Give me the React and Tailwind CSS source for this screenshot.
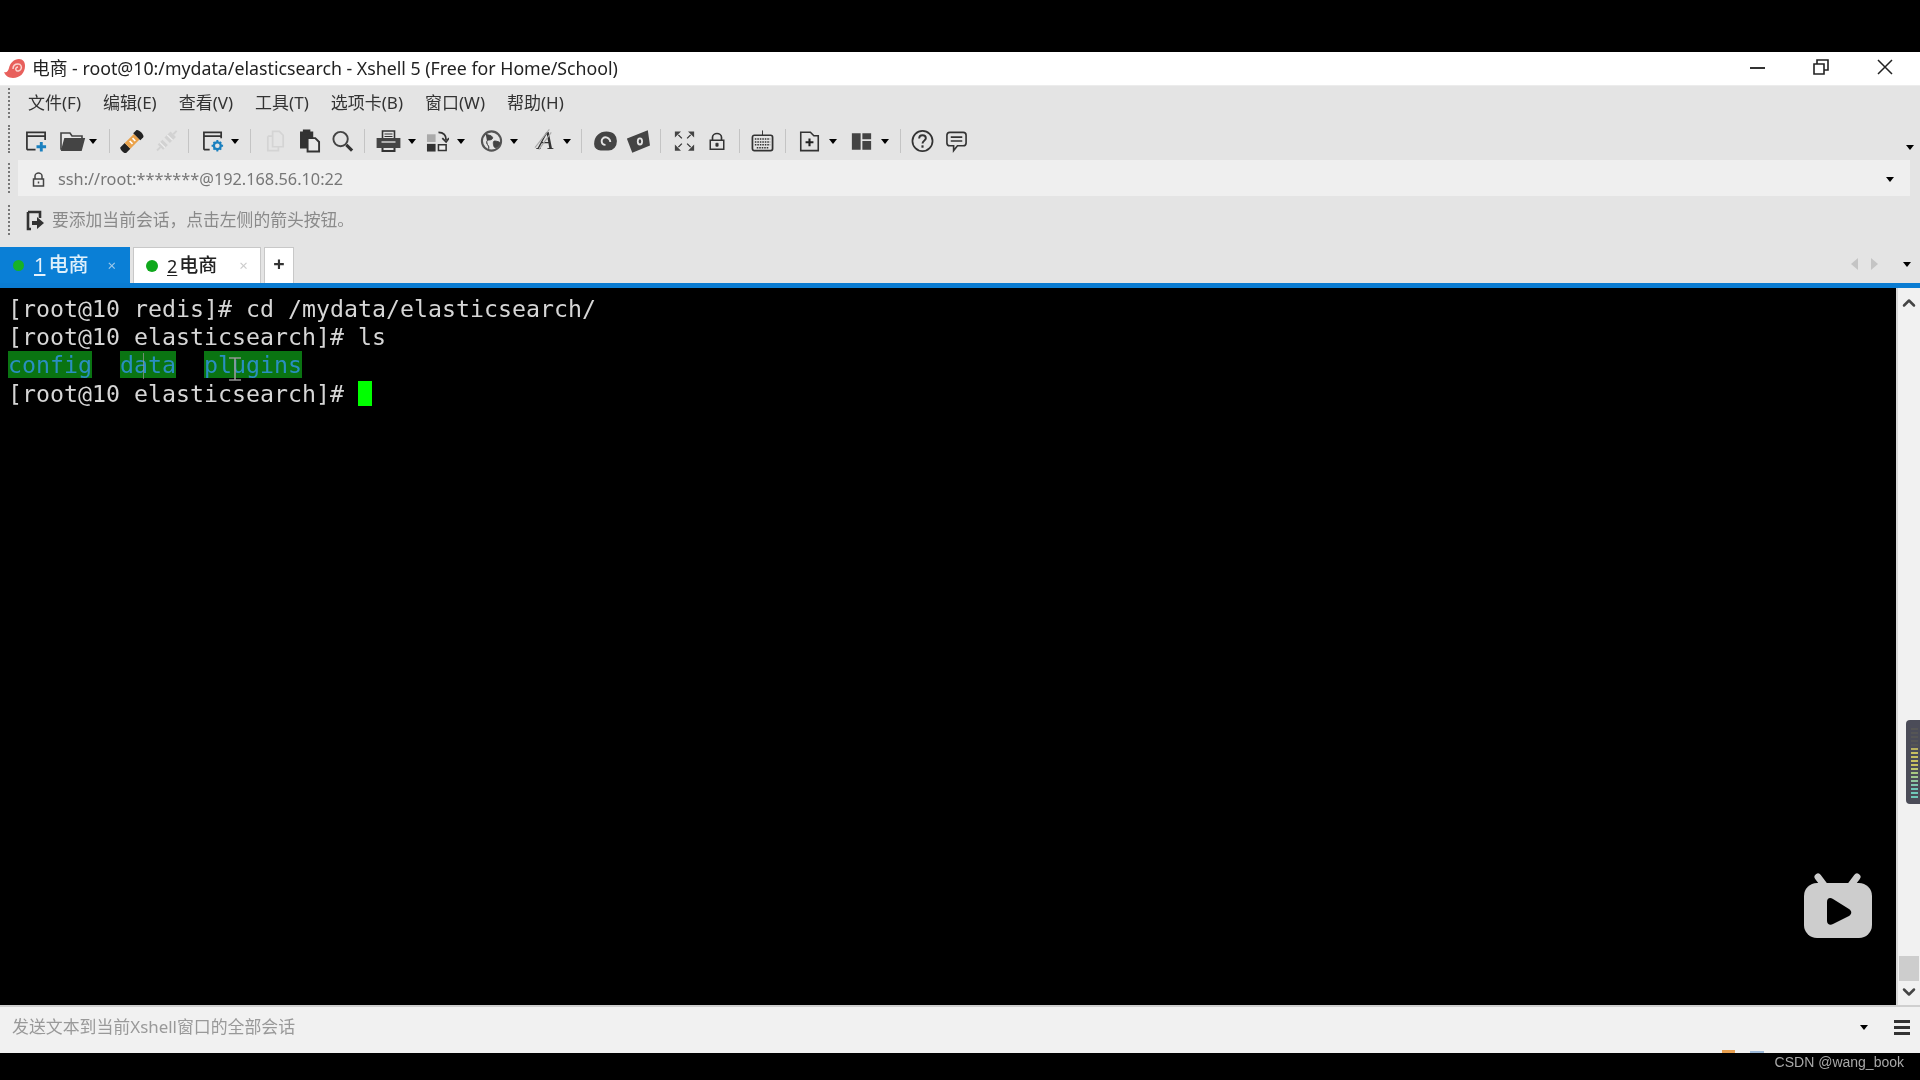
import { ChevronUp, ChevronDown } from 'lucide-react';

const UI_FONT = { fontFamily: '"Noto Sans", "Noto Sans CJK SC", sans-serif' };

const menus = ['文件(F)', '编辑(E)', '查看(V)', '工具(T)', '选项卡(B)', '窗口(W)', '帮助(H)'];

function Caret({ className = '' }) {
    return <span className={`block w-0 h-0 border-x-[4px] border-x-transparent border-t-[5px] border-t-black ${className}`} />;
}

function Sep({ className = '' }) {
    return <span className={`block w-px h-[24px] bg-[#c4c4c4] ${className}`} />;
}

function Handle({ className = '' }) {
    return <span className={`block w-[2px] border-l-2 border-dotted border-[#777] ${className}`} />;
}

function Icon({ w = 24, color = '#333', children, className = '' }) {
    return (
        <svg width={w} height={24} viewBox="0 0 24 24" fill="none" stroke={color} strokeWidth="1.8" className={`block shrink-0 ${className}`}>
            {children}
        </svg>
    );
}

function Toolbar() {
    return (
        <div className="h-[38px] flex items-center pl-[25px] pt-[4px]">
            {/* new session */}
            <Icon w={23}>
                <path d="M2 21V3h19v8M2 7h19M2 21h9" />
                <path d="M17 13v10M12 18h10" stroke="#1a80bf" strokeWidth="3" />
            </Icon>
            {/* open */}
            <Icon w={28} className="ml-[10px]">
                <path d="M1 4h9l2 3h10v3H6l-3 10H1z" fill="#e8e8e8" stroke="#444" strokeWidth="1.6" />
                <path d="M5 10h19l-3 11H2z" fill="#444" stroke="#444" />
            </Icon>
            <Caret className="ml-[3px]" />
            <Sep className="ml-[12px]" />
            {/* connect */}
            <Icon w={25} className="ml-[10px]">
                <g transform="rotate(-45 12 12)">
                    <path d="M-1 8h6v8H-1c-2 0-2-8 0-8z" fill="#222" stroke="none" />
                    <path d="M5 8h13v8H5z" fill="#eaa24a" stroke="none" />
                    <path d="M18 7h4c3 0 3 10 0 10h-4z" fill="#222" stroke="none" />
                    <path d="M10 10v4M14 10v4" stroke="#fff" strokeWidth="1.6" />
                </g>
            </Icon>
            {/* disconnect */}
            <Icon w={23} color="#d2d2d2" className="ml-[10px]">
                <g transform="rotate(-45 12 12)">
                    <path d="M-2 12h5M22 12h5" strokeWidth="2" />
                    <path d="M3 8h7v8H3zM13 8h9v8h-9z" fill="#d2d2d2" stroke="none" />
                    <path d="M6 8v8M17 8v8" stroke="#eee" strokeWidth="1.4" />
                </g>
            </Icon>
            <Sep className="ml-[10px]" />
            {/* properties */}
            <Icon w={23} className="ml-[13px]">
                <path d="M2 21V3h18v6M2 7h18M2 21h6" />
                <circle cx="16" cy="17" r="3.6" stroke="#1a80bf" strokeWidth="2.4" />
                <path d="M16 11v2M16 21v2M10 17h2M20 17h2M12 13l1.500 1.500M18.500 19.500L20 21M20 13l-1.500 1.500M13.500 19.500L12 21" stroke="#1a80bf" strokeWidth="2" />
            </Icon>
            <Caret className="ml-[6px]" />
            <Sep className="ml-[11px]" />
            {/* copy */}
            <Icon w={23} color="#d4d4d4" className="ml-[13px]">
                <path d="M9 2h7l4 4v12H9zM4 7h5M4 7v15h11v-4" />
            </Icon>
            {/* paste */}
            <Icon w={23} className="ml-[11px]">
                <path d="M3 3h12v6H9v10H3z" fill="#333" stroke="#333" />
                <path d="M6 1h6v3H6z" fill="#333" />
                <path d="M10 9h8l4 4v10H10z" fill="#e8e8e8" strokeWidth="2" />
            </Icon>
            {/* find */}
            <Icon w={23} className="ml-[10px]">
                <circle cx="10" cy="10" r="7.5" stroke="#444" strokeWidth="2" />
                <path d="M16 16l6 6" strokeWidth="3.2" stroke="#333" />
            </Icon>
            <Sep className="ml-[10px]" />
            {/* print */}
            <Icon w={25} className="ml-[11px]">
                <path d="M6 2h12v8H6z" strokeWidth="1.6" />
                <path d="M8 5h8M8 7.500h8" strokeWidth="1.2" />
                <path d="M1 10h22v8H1z" fill="#444" stroke="#444" />
                <path d="M6 19v3h12v-3" strokeWidth="2" />
                <path d="M5 13h14" stroke="#ddd" strokeWidth="1.4" />
            </Icon>
            <Caret className="ml-[7px]" />
            {/* transfer */}
            <Icon w={23} className="ml-[10px]">
                <path d="M1 5h9v8H1z" fill="#aaa" stroke="none" />
                <path d="M1 15h9v8H1z" fill="#333" stroke="none" />
                <path d="M13 16h8v6h-8z" fill="#eee" stroke="#333" strokeWidth="1.6" />
                <path d="M13 3c5 0 8 3 8 8M17 9l4 4 3-4" strokeWidth="1.8" />
            </Icon>
            <Caret className="ml-[8px]" />
            {/* globe */}
            <Icon w={23} className="ml-[15px]">
                <circle cx="12" cy="12" r="10" strokeWidth="2.2" stroke="#555" />
                <path d="M6 5c3 1 6 1 7 3s-2 3-4 3-3 3-1 5 1 4 1 5M15 12c2 0 6 1 6 2s-3 5-5 5-3-7-1-7z" fill="#444" stroke="#444" strokeWidth="1" />
            </Icon>
            <Caret className="ml-[7px]" />
            {/* font */}
            <div className="relative w-[23px] h-[26px] ml-[16px] flex items-center justify-center overflow-visible">
                <Icon w={23} className="absolute left-0 top-0">
                    <path d="M1 20L16 1M5 22L18 4" stroke="#aaa" strokeWidth="1.2" />
                </Icon>
                <span className="text-[26px] leading-[26px] italic text-[#333]" style={{ fontFamily: '"Liberation Serif", serif' }}>A</span>
            </div>
            <Caret className="ml-[6px]" />
            <Sep className="ml-[10px]" />
            {/* swirl */}
            <Icon w={23} className="ml-[12px]">
                <path d="M1 15C1 8 6 3 13 3s10 4 10 9-3 9-8 9H7c-3 0-6-2-6-6z" fill="#444" stroke="#444" />
                <path d="M12 16c-3 0-4-2-4-4s2-4 4-4 5 2 5 5" stroke="#e4e4e4" strokeWidth="2" />
            </Icon>
            {/* script */}
            <Icon w={23} className="ml-[10px]">
                <path d="M1 10l20-8 2 14-17 7z" fill="#444" stroke="#444" />
                <ellipse cx="13.5" cy="12.5" rx="3.2" ry="4.2" fill="#e4e4e4" stroke="none" />
                <ellipse cx="13.5" cy="12.5" rx="1.3" ry="2.2" fill="#444" stroke="none" />
            </Icon>
            <Sep className="ml-[10px]" />
            {/* full screen */}
            <Icon w={21} className="ml-[13px]">
                <path d="M1 1h7L1 8zM23 1h-7l7 7zM1 23h7l-7-7zM23 23h-7l7-7z" fill="#444" stroke="none" />
                <path d="M5 5l4 4M19 5l-4 4M5 19l4-4M19 19l-4-4" strokeWidth="1.5" />
            </Icon>
            {/* lock */}
            <Icon w={18} className="ml-[13px]">
                <path d="M6 11V7c0-3 3-5 6-5s6 2 6 5v4" strokeWidth="2.2" />
                <path d="M3 11h18v12H3z" strokeWidth="2" />
                <path d="M10.500 15h3v4h-3z" fill="#333" strokeWidth="1" />
            </Icon>
            <Sep className="ml-[13px]" />
            {/* keyboard */}
            <Icon w={23} className="ml-[11px]">
                <path d="M12 1v5" strokeWidth="1" />
                <rect x="1.5" y="6" width="21" height="16" rx="2" strokeWidth="1.8" />
                <path d="M4 10h16M4 13h16M4 16h16M6 19h12" strokeWidth="1.6" strokeDasharray="1.6 1" />
            </Icon>
            <Sep className="ml-[11px]" />
            {/* new folder */}
            <Icon w={21} className="ml-[13px]">
                <path d="M2 2h11l4 4h5v17H2z" strokeWidth="1.8" />
                <path d="M12 9v9M7.500 13.500h9" strokeWidth="2.4" stroke="#222" />
            </Icon>
            <Caret className="ml-[9px]" />
            {/* layout */}
            <Icon w={21} className="ml-[14px]">
                <path d="M1 3h10v19H1zM13 3h10v7H13zM13 12h10v10H13z" fill="#444" stroke="none" />
            </Icon>
            <Caret className="ml-[9px]" />
            <Sep className="ml-[11px]" />
            {/* help */}
            <Icon w={23} className="ml-[10px]">
                <circle cx="12" cy="12" r="10.5" strokeWidth="1.8" />
                <path d="M8.500 9.500c0-2 1.500-3.500 3.500-3.500s3.500 1.300 3.500 3.200-3.500 3-3.500 5.300" strokeWidth="2" />
                <path d="M12 16.500v2.500" strokeWidth="2.2" />
            </Icon>
            {/* feedback */}
            <Icon w={23} className="ml-[11px]">
                <path d="M5 3h14c2 0 3 1 3 3v8c0 2-1 3-3 3h-6l-4 5v-5H5c-2 0-3-1-3-3V6c0-2 1-3 3-3z" strokeWidth="1.7" />
                <path d="M6 8h12M6 12h12" strokeWidth="1.7" />
            </Icon>
            <Caret className="ml-auto mr-[6px] mt-[12px]" />
        </div>
    );
}

function Tabs() {
    return (
        <div className="h-[36px] flex items-stretch">
            <div className="w-[130px] bg-[#0a7fd6] flex items-center pl-[13px]">
                <span className="w-[11px] h-[11px] rounded-full bg-[#17b226]" />
                <span className="ml-[10px] text-[20px] leading-none text-white/90 underline underline-offset-2">1</span>
                <span className="ml-[3px] text-[20px] font-medium leading-none text-[#dff0fb]">电商</span>
                <span className="ml-[19px] text-[15px] leading-none text-[#9cc8ea]">×</span>
            </div>
            <div className="ml-[3px] w-[128px] bg-white border border-b-0 border-[#c8c8c8] flex items-center pl-[12px]">
                <span className="w-[12px] h-[12px] rounded-full bg-[#0fa81c]" />
                <span className="ml-[9px] text-[18px] leading-none text-[#222] underline underline-offset-2">2</span>
                <span className="ml-[2px] text-[19px] font-medium leading-none text-[#222]">电商</span>
                <span className="ml-[22px] text-[15px] leading-none text-[#ccc]">×</span>
            </div>
            <div className="ml-[3px] w-[30px] bg-white border border-b-0 border-[#c8c8c8] flex items-center justify-center text-[20px] font-bold leading-none text-[#333] pb-[3px]">+</div>
            <div className="ml-auto flex items-center pb-[2px]">
                <span className="block w-0 h-0 border-y-[6px] border-y-transparent border-r-[7px] border-r-[#c4c4c4]" />
                <span className="ml-[13px] block w-0 h-0 border-y-[6px] border-y-transparent border-l-[7px] border-l-[#c4c4c4]" />
                <Caret className="ml-[25px] mr-[9px]" />
            </div>
        </div>
    );
}

function Terminal() {
    return (
        <div className="flex-1 relative bg-black pl-[8px] pt-[7px] text-[23.25px] leading-[28.2px] text-[#d6d6d6] whitespace-pre" style={{ fontFamily: '"DejaVu Sans Mono", monospace' }}>
            <div>[root@10 redis]# cd /mydata/elasticsearch/</div>
            <div>[root@10 elasticsearch]# ls</div>
            <div className="text-[#2a8fc0]">
                <span className="bg-[#0a7412]">config</span>
                {'  '}
                <span className="bg-[#0a7412]">data</span>
                {'  '}
                <span className="bg-[#0a7412]">plugins</span>
            </div>
            <div className="flex items-center">
                [root@10 elasticsearch]#{' '}
                <span className="inline-block w-[14px] h-[25px] bg-[#00ff00]" />
            </div>
            {/* mouse I-beam ghosts over the listing */}
            <span className="absolute left-[143px] top-[65px] w-px h-[26px] bg-[#9a9a9a]/70" />
            <span className="absolute left-[234px] top-[70px] w-[2px] h-[22px] bg-[#9a9a9a]/80" />
            <span className="absolute left-[229px] top-[69px] w-[12px] h-[2px] bg-[#9a9a9a]/70" />
            <span className="absolute left-[229px] top-[91px] w-[12px] h-[2px] bg-[#9a9a9a]/70" />
            {/* bilibili watermark */}
            <svg width="70" height="66" viewBox="0 0 70 66" className="absolute left-[1803px] top-[585px]">
                <path d="M21 12L15 4M48 12l6-8" stroke="#cdcdcd" strokeWidth="7" strokeLinecap="round" />
                <rect x="1" y="10" width="68" height="55" rx="13" fill="#cdcdcd" />
                <path d="M24 29c0-4 3-5 6-3l16 10c3 2 3 5 0 7L30 51c-3 2-6 0-6-3z" fill="#000" />
            </svg>
        </div>
    );
}

function Scrollbar() {
    return (
        <div className="w-[24px] relative bg-[#f1f1f1] flex flex-col items-center border-l-2 border-[#d8d8d8]">
            <ChevronUp size={20} strokeWidth={3} className="mt-[5px] text-[#444]" />
            <div className="mt-auto w-[20px] h-[25px] bg-[#cdcdcd]" />
            <ChevronDown size={20} strokeWidth={3} className="mt-[1px] mb-[3px] text-[#444]" />
            {/* overlay widget on right edge */}
            <div className="absolute left-[8px] top-[432px] w-[16px] h-[84px] rounded-l-[4px] bg-[#4b4c58] pl-[5px] pt-[8px] flex flex-col gap-[2px] overflow-hidden">
                {['#555', '#555', '#555', '#555', '#555', '#b8b060', '#c8c060', '#c8c060', '#c8c060', '#c8c060', '#c0c870', '#a8c880', '#a0c890', '#90c8a0', '#80c8b0', '#70c8b8', '#70c8b8', '#70c8b8'].map((c, i) => (
                    <span key={i} className="block w-[7px] h-[2px] shrink-0" style={{ background: c }} />
                ))}
            </div>
        </div>
    );
}

export default function App() {
    return (
        <div className="w-[1920px] h-[1080px] overflow-hidden bg-black flex flex-col blur-[0.4px]" style={UI_FONT}>
            <div className="h-[52px] shrink-0" />

            {/* Title bar */}
            <div className="h-[33px] shrink-0 bg-white flex items-center pl-[3px]">
                <svg width="24" height="24" viewBox="0 0 24 24" className="block">
                    <path d="M1 15c3 1 4-1 5-4 1-5 5-9 10-9 4 0 6 3 6 7 0 7-5 12-12 12-5 0-8-3-9-6z" fill="#e8605c" />
                    <path d="M10 12c0-3 2-5 5-5s4 3 3 5-4 3-5 1 1-3 2-3" stroke="#fbd4d0" strokeWidth="1.5" fill="none" />
                </svg>
                <span className="ml-[5px] text-[17.75px] leading-none text-[#222]">电商 - root@10:/mydata/elasticsearch - Xshell 5 (Free for Home/School)</span>
                <div className="ml-auto flex items-center text-[#222]">
                    <span className="block w-[15px] h-[2px] bg-[#333] mr-[48px] mb-[2px]" />
                    <svg width="16" height="16" viewBox="0 0 16 16" fill="none" stroke="#222" strokeWidth="1.6" className="block mr-[48px] mb-[3px]">
                        <path d="M1 5h10v10H1zM4 5V1h11v10h-4" />
                    </svg>
                    <svg width="16" height="16" viewBox="0 0 16 16" fill="none" stroke="#222" strokeWidth="1.5" className="block mr-[27px] mb-[3px]">
                        <path d="M1 1l14 14M15 1L1 15" />
                    </svg>
                </div>
            </div>

            {/* Menu, toolbar, address, hint */}
            <div className="shrink-0 h-[168px] bg-[#e4e4e4] flex flex-col border-t border-[#ececec]">
                <div className="h-[34px] flex items-center relative pl-[28px] gap-[22px] text-[17px] leading-none text-[#333] pb-[2px]">
                    <Handle className="absolute left-[8px] top-[2px] h-[30px]" />
                    {menus.map((m) => <span key={m}>{m}</span>)}
                </div>
                <div className="relative">
                    <Handle className="absolute left-[8px] top-[5px] h-[28px]" />
                    <Toolbar />
                </div>
                <div className="h-[36px] mt-[2px] relative ml-[18px] mr-[10px] bg-[#efefef] flex items-center pl-[14px] pt-[2px] text-[16.3px] leading-none text-[#777]">
                    <Handle className="absolute -left-[10px] top-[3px] h-[30px]" />
                    <svg width="13" height="15" viewBox="0 0 13 15" fill="none" stroke="#444" strokeWidth="1.5" className="block">
                        <path d="M3 7V4c0-2 2-3 3.500-3S10 2 10 4v3M1.500 7h10v7h-10z" />
                        <path d="M6.500 9.500v2" />
                    </svg>
                    <span className="ml-[13px]">ssh://root:*******@192.168.56.10:22</span>
                    <Caret className="ml-auto mr-[16px]" />
                </div>
                <div className="h-[40px] relative flex items-center pl-[26px] pt-[8px] text-[16.8px] leading-none text-[#8a8a8a]">
                    <Handle className="absolute left-[8px] top-[9px] h-[30px]" />
                    <svg width="19" height="21" viewBox="0 0 19 21" className="block">
                        <path d="M2 2h12v6M2 2v17h3" fill="none" stroke="#333" strokeWidth="2.6" />
                        <path d="M6 11h5V7l7 6-7 6v-4H6z" fill="#333" />
                    </svg>
                    <span className="ml-[7px]">要添加当前会话，点击左侧的箭头按钮。</span>
                </div>
            </div>

            {/* Tabs */}
            <div className="shrink-0 bg-[#e4e4e4] -mt-[6px]">
                <Tabs />
                <div className="h-[5px] bg-[#0a7cd2]" />
            </div>

            {/* Terminal + scrollbar */}
            <div className="flex-1 flex min-h-0">
                <Terminal />
                <Scrollbar />
            </div>

            {/* Send bar */}
            <div className="h-[48px] shrink-0 border-t-2 border-[#cfcfcf] bg-[#f1f1f1] flex items-center pl-[12px] pb-[5px] text-[16.9px] leading-none text-[#999] relative">
                <span>发送文本到当前Xshell窗口的全部会话</span>
                <Caret className="ml-auto mr-[26px]" />
                <div className="flex flex-col gap-[3px] mr-[10px]">
                    <span className="block w-[16px] h-[3px] bg-[#333]" />
                    <span className="block w-[16px] h-[3px] bg-[#333]" />
                    <span className="block w-[16px] h-[3px] bg-[#333]" />
                </div>
                {/* bits of the desktop peeking through under the window */}
                <span className="absolute left-[1722px] bottom-0 w-[13px] h-[3px] bg-[#e8a050]" />
                <span className="absolute left-[1750px] bottom-0 w-[14px] h-[2px] bg-[#9cb8d8]" />
            </div>

            {/* Bottom strip */}
            <div className="h-[27px] shrink-0 flex items-center justify-end pr-[16px] pb-[9px] text-[14px] leading-none text-[#a8a8a8]" style={{ fontFamily: '"Liberation Sans", sans-serif' }}>
                CSDN @wang_book
            </div>
        </div>
    );
}
